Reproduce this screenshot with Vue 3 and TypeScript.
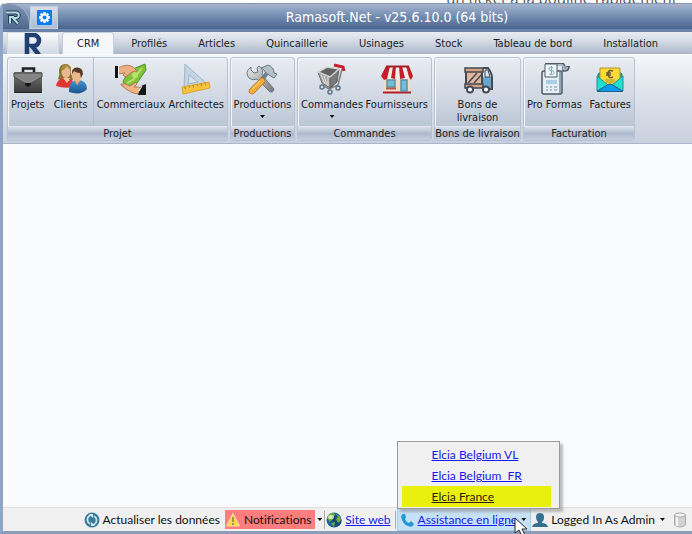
<script setup lang="ts">
import { ref } from 'vue'

interface Command {
  label: string
  icon: string
  drop?: boolean
  divider?: boolean
}
interface Group {
  name: string
  size: string
  commands: Command[]
}

const tabs = ['CRM', 'Profilés', 'Articles', 'Quincaillerie', 'Usinages', 'Stock', 'Tableau de bord', 'Installation']
const activeTab = ref('CRM')
const menuOpen = ref(true)
const contacts = ['Elcia Belgium VL', 'Elcia Belgium\u00a0 FR', 'Elcia France']

const groups: Group[] = [
  {
    name: 'Projet',
    size: 'xl',
    commands: [
      { label: 'Projets', icon: 'case' },
      { label: 'Clients', icon: 'people' },
      { label: 'Commerciaux', icon: 'money', divider: true },
      { label: 'Architectes', icon: 'ruler' },
    ],
  },
  { name: 'Productions', size: 's', commands: [{ label: 'Productions', icon: 'tools', drop: true }] },
  {
    name: 'Commandes',
    size: 'l',
    commands: [
      { label: 'Commandes', icon: 'cart', drop: true },
      { label: 'Fournisseurs', icon: 'shop' },
    ],
  },
  { name: 'Bons de livraison', size: 'm', commands: [{ label: 'Bons de livraison', icon: 'truck' }] },
  {
    name: 'Facturation',
    size: 'ml',
    commands: [
      { label: 'Pro Formas', icon: 'terminal' },
      { label: 'Factures', icon: 'mail' },
    ],
  },
]
</script>

<template>
  <div class="page">
    <div class="behind"><span>un ticket à la pouline rapidement</span></div>
    <div class="window">
      <header class="titlebar">
        <div class="app-corner">
          <svg width="16" height="16" viewBox="0 0 16 16" aria-hidden="true">
            <path d="M1 3.500h10a2.500 2.500 0 0 1 0 5.500H8l5 5.500M5 14.500V8h4" fill="none" stroke="#24394f" stroke-width="4" />
            <path d="M1 3.500h10a2.500 2.500 0 0 1 0 5.500H8l5 5.500M5 14.500V8h4" fill="none" stroke="#b5dce2" stroke-width="2" />
          </svg>
        </div>
        <button class="gear" aria-label="Options">
          <svg width="15" height="15" viewBox="0 0 15 15">
            <rect width="15" height="15" rx="1" fill="#087cf5" />
            <g stroke="#fff" stroke-width="2.400">
              <path d="M7.500 2v11M2 7.500h11M3.600 3.600l7.800 7.800M11.400 3.600l-7.800 7.800" />
            </g>
            <circle cx="7.500" cy="7.500" r="4" fill="#fff" />
            <circle cx="7.500" cy="7.500" r="2" fill="#087cf5" />
          </svg>
        </button>
        <h1>Ramasoft.Net - v25.6.10.0 (64 bits)</h1>
      </header>

      <nav class="tabs">
        <button class="home" aria-label="Menu principal">
          <svg width="20" height="22" viewBox="0 0 20 22">
            <path d="M4 22V2h6.500a5 5 0 0 1 0 11H9l7 9" fill="none" stroke="#1f3f70" stroke-width="4.600" />
          </svg>
        </button>
        <button v-for="t in tabs" :key="t" class="tab" :class="{ active: t === activeTab }" @click="activeTab = t">{{ t }}</button>
      </nav>

      <div class="ribbon">
        <section v-for="g in groups" :key="g.name" class="group" :class="g.size">
          <div class="commands">
            <button v-for="c in g.commands" :key="c.label" class="command" :class="[c.icon, { divider: c.divider }]">
              <svg width="32" height="32" viewBox="0 0 32 32" aria-hidden="true">
                <defs>
                  <linearGradient id="steel" x2="0" y2="1"><stop stop-color="#777" /><stop offset="1" stop-color="#383838" /></linearGradient>
                  <linearGradient id="silver" x2="1" y2="1"><stop stop-color="#eee" /><stop offset="1" stop-color="#777" /></linearGradient>
                  <linearGradient id="blue" x2="0" y2="1"><stop stop-color="#469ad0" /><stop offset="1" stop-color="#195392" /></linearGradient>
                </defs>
                <g v-if="c.icon === 'case'">
                  <path d="M11 11V5.500h11V11" fill="none" stroke="#222" stroke-width="2.600" />
                  <rect x="9" y="9" width="3.500" height="4" fill="#333" /><rect x="20.500" y="9" width="3.500" height="4" fill="#333" />
                  <rect x="2" y="9" width="28" height="21" rx="1" fill="url(#steel)" />
                  <path d="M2 10h28v4l-14 8L2 14z" fill="#858585" stroke="#4b4b4b" /><path d="M2.500 29.500h27" stroke="#222" />
                  <path d="M13 20h6v2l-3 2-3-2z" fill="#171717" />
                </g>
                <g v-else-if="c.icon === 'people'">
                  <path d="M3 16q2-4 1-9Q5 1 10 1q7 0 6 9l2 7H5" fill="#8a7331" />
                  <ellipse cx="11" cy="9" rx="4.500" ry="6" fill="#eab78e" /><path d="M6 8q4-1 6-5l4 6V4l-4-3-5 2z" fill="#a58b40" />
                  <path d="M1 23q1-7 8-8l4 3 4-2 2 8Q9 26 1 23z" fill="#df3832" /><path d="m8 15 4 5 3-5" fill="#f7c5a1" />
                  <path d="M14 27q0-9 8-10 10 0 10 9-6 7-18 3z" fill="url(#blue)" />
                  <path d="m19 17 3 5 4-5" fill="#e3a36d" /><ellipse cx="22" cy="12" rx="5" ry="6.500" fill="#e9b789" />
                  <path d="M17 11q-1-6 5-6.500 6 0 6 6.500l-2 4-1-5q-4 0-6-2z" fill="#5a3828" />
                </g>
                <g v-else-if="c.icon === 'money'">
                  <path d="m8 18 4-6L18 6l12-5 1 6-9 13-11 4z" fill="#7fc23a" stroke="#4d912b" /><path d="m12 20 6-3 9-12" fill="none" stroke="#b6df70" stroke-width="2" /><circle cx="20" cy="12" r="3" fill="#b5e36a" />
                  <path d="M3 5q9-5 15-1l4 4-5 1-5 4q-3 2-4-1l2-2-7 1z" fill="#e9b084" stroke="#b98058" />
                  <path d="M0 3h3v12H0z" fill="#111" /><path d="M3 4h1v9H3z" fill="#fff" />
                  <path d="M6 21q5-1 9 2l6-4 1 2-3 3q5-1 8 2l-3 5q-8 0-18-9z" fill="#edb486" stroke="#b77a52" />
                  <path d="m26 23 5-2v11h-8z" fill="#171717" /><path d="m24 28 3-5" stroke="#fff" />
                </g>
                <g v-else-if="c.icon === 'ruler'">
                  <path fill-rule="evenodd" d="M5 1 4 25l22-5zM9 12l-1 9 10-2z" fill="#c3d5e5" stroke="#9fb7cc" />
                  <path d="m2 24 27-5 1 6-27 6z" fill="#f6c23d" stroke="#dba62f" /><path d="m5 24 .5 2m3.500-3 .5 1.500m3.500-2.500.5 2.500m3.500-3 .5 1.500m3.500-2.500.5 2.500m3.500-3 .5 1.500" fill="none" stroke="#a8812a" />
                </g>
                <g v-else-if="c.icon === 'tools'">
                  <path d="M5 4q-7 5-2 11 4 3 8 1l12 12q4 3 5-2L16 12q2-6-3-9l-2 2 1 4-4 1-3-3z" fill="url(#silver)" stroke="#657b8b" />
                  <path d="m15 5 7-3q6 2 6 8l3 1-3 4-5-3-3-2q-1-3-5-5z" fill="#b5c1c9" stroke="#647887" /><path d="m21 10-6 8" stroke="#71818d" stroke-width="4" />
                  <path d="M16 18 6 28" stroke="#b06f25" stroke-width="6.500" stroke-linecap="round" /><path d="M16 18 6 28" stroke="#f7ae3a" stroke-width="5" stroke-linecap="round" /><path d="m14 18-8 8" stroke="#ffdf92" />
                </g>
                <g v-else-if="c.icon === 'cart'">
                  <path d="m26 6-4 16-9 4-7-4" fill="none" stroke="#808080" stroke-width="1.500" />
                  <path d="m2 9 12 5 3 9-3 2-8-5z" fill="#a9a9a9" stroke="#686868" />
                  <path d="m14 14 9-8-2 13-7 6z" fill="#7b7b7b" stroke="#5c5c5c" />
                  <path d="m2 9 9-5 12 2-9 8z" fill="#626262" stroke="#d5d5d5" stroke-width="1.500" />
                  <path d="m5 12 4 9m-1-8 3 9m1-8v9" stroke="#dedede" />
                  <path d="m18 2 9 2 1 4" fill="none" stroke="#c9202d" stroke-width="3" />
                  <g fill="#d4e1ea" stroke="#5e7488" stroke-width="1.500"><circle cx="6" cy="24" r="2" /><circle cx="14" cy="29" r="2" /><circle cx="22" cy="25" r="2" /></g>
                </g>
                <g v-else-if="c.icon === 'shop'">
                  <path d="M3 10h26v19H3z" fill="#f1ddc9" /><path d="M2 29.500h28" stroke="#b71e29" stroke-width="2" />
                  <path d="M5 3h22l5 10-2 4-2-3-4 3-3-3-4 3-4-3-3 3-4-3-3 3-3-4z" fill="#f3eeee" />
                  <path d="M5 3h4L6 16l-3 1-3-4zM12 3h3l-1 13-4-1zM18 3h3l3 12-5 1zM25 3h3l4 10-2 4-2-3z" fill="#c22029" /><path d="M5 3.500h23" stroke="#a81d26" stroke-width="2" />
                  <path d="M6 17h8v7H6zM20 17h6v11h-6z" fill="#72bdd8" stroke="#5c8f9f" stroke-width="1.500" /><path d="M5 25.500h10" stroke="#b4594a" stroke-width="2" />
                </g>
                <g v-else-if="c.icon === 'truck'">
                  <path d="M4 9h16v12H4z" fill="#e3b49b" /><path d="M21 14h9v11h-9z" fill="#6aa5d2" />
                  <path d="m6 20 9-10m-3 10 8-9" stroke="#424a54" stroke-width="1.500" />
                  <path d="M3 5h18v4H3zM3 21h18v4H3z" fill="#d89f84" stroke="#424a54" stroke-width="1.500" /><path d="M4 9v12m16-12v12M21 5h5q4 5 4 10v11H21" fill="none" stroke="#424a54" stroke-width="2" />
                  <path d="M23 7h3l2 7h-5z" fill="#d6e6f0" stroke="#424a54" />
                  <g fill="#fff" stroke="#424a54" stroke-width="2"><circle cx="8" cy="26.500" r="3" /><circle cx="24" cy="26.500" r="3" /></g>
                </g>
                <g v-else-if="c.icon === 'terminal'">
                  <path d="M7 1h16q3 0 3 4v2q4 0 4-3V3" fill="none" stroke="#4f5a65" stroke-width="3.500" /><path d="M19 2h4q3 0 3 4 3 1 3-2" fill="none" stroke="#a5bccb" stroke-width="2" />
                  <rect x="4" y="8" width="20" height="23" rx="2" fill="#e3eef5" stroke="#4f5a65" stroke-width="1.500" /><path d="M21 9h2v21h-2z" fill="#8fa9b9" />
                  <path d="M7 1h12v13H7z" fill="#f1f6f9" stroke="#4f5a65" /><path d="M15.500 5q-4.500-2-4.500 1 0 1.500 2 1.500 3 0 3 2 0 3-5 1.500M13.500 3v9" fill="none" stroke="#7fa9c3" />
                  <path d="M8 17h11v4H8z" fill="#a9d0e2" /><path d="M8 24h2m2 0h2m2 0h3M8 27h2m2 0h2m2 0h3" stroke="#9db3c0" stroke-width="1.500" />
                </g>
                <g v-else>
                  <path d="m4 11 3-2v19H4zM28 11l-3-2v19h3z" fill="#16a6b4" stroke="#28727b" />
                  <path d="M6 5h20v16l-10 4-10-4z" fill="#ffdb37" stroke="#ae942b" />
                  <path d="M19 8q-5-2-5 3t5 3m-7-4h5m-5 2h5" fill="none" stroke="#685c28" stroke-width="1.500" /><path d="M11 17h10M12 19h8" stroke="#a48c35" />
                  <path d="m3 13 11 9-11 6zM29 13l-11 9 11 6z" fill="#1fe0cf" stroke="#248b96" />
                  <path d="m3 28.500 11-7q2-1 4 0l11 7z" fill="#0b9bec" stroke="#216089" />
                </g>
              </svg>
              <span class="caption">{{ c.label }}</span>
              <i v-if="c.drop" class="arrow"></i>
            </button>
          </div>
          <h2>{{ g.name }}</h2>
        </section>
      </div>

      <main class="workspace"></main>

      <footer class="status">
        <button class="item refresh">
          <svg width="16" height="16" viewBox="0 0 16 16" aria-hidden="true">
            <circle cx="8" cy="8" r="7.500" fill="#397b9b" />
            <path d="M7 3Q2 5 4 10l2 2M9 13q5-2 3-7l-2-2" fill="none" stroke="#d3e7ee" stroke-width="1.700" /><path d="M5 2h4v4zM11 14H7v-4z" fill="#d3e7ee" />
          </svg>
          Actualiser les données
        </button>
        <button class="item notice">
          <svg width="16" height="16" viewBox="0 0 16 16" aria-hidden="true"><path d="M8 1.500 14.500 14h-13z" fill="#ffd84a" stroke="#f3e3a8" stroke-linejoin="round" /><path d="M8 5v5m0 1v2" stroke="#8d7a3f" stroke-width="1.500" /></svg>
          Notifications
        </button>
        <button class="drop" aria-label="Liste des notifications"><i class="arrow"></i></button>
        <div class="item site">
          <svg width="16" height="16" viewBox="0 0 16 16" aria-hidden="true">
            <circle cx="8" cy="8" r="7.500" fill="#17669d" /><circle cx="10" cy="9" r="5.500" fill="#164b78" />
            <path d="M1 6Q2 1 8 1l1 2-3 2 1 2-3 3zM10 2q5 2 5 6l-3 3-2-4 2-2zM5 11l4-1-1 5z" fill="#76ad44" /><ellipse cx="5" cy="5" rx="3" ry="2" fill="#e2f2cd" opacity=".8" />
          </svg>
          <a href="#">Site web</a>
        </div>
        <div class="assist">
          <svg width="16" height="16" viewBox="0 0 16 16" aria-hidden="true"><path d="M3 2q-3 1-1 6t6 6q5 2 6-2l-3-3-2 2q-3-1-4-4l1-2-1-3z" fill="#229bd5" /></svg>
          <a href="#">Assistance en ligne</a>
          <button class="drop" aria-label="Choisir un contact" @click="menuOpen = !menuOpen"><i class="arrow"></i></button>
          <div v-if="menuOpen" class="menu">
            <a v-for="(c, i) in contacts" :key="c" href="#" :class="{ chosen: i === 2 }">{{ c }}</a>
          </div>
          <svg class="pointer" width="14" height="20" viewBox="0 0 14 20" aria-hidden="true"><path d="M1 1v15l4-3 3 6 3-1-3-6h5z" fill="#fff" stroke="#222" /></svg>
        </div>
        <button class="item user">
          <svg width="16" height="16" viewBox="0 0 16 16" aria-hidden="true"><path d="M4 5q0-4 4-4t4 4-2 5v1q5 0 6 4H0q1-4 6-4v-1Q4 8 4 5z" fill="#33718c" /></svg>
          Logged In As Admin
          <i class="arrow"></i>
        </button>
        <svg class="database" width="14" height="16" viewBox="0 0 14 16" role="img" aria-label="Base de données"><path d="M1.500 3v10q5.500 4 11 0V3" fill="#d2d2d2" stroke="#aaa" /><path d="M4 5v9" stroke="#f5f5f5" stroke-width="2" /><ellipse cx="7" cy="3" rx="5.500" ry="2" fill="#f2f2f2" stroke="#aaa" /></svg>
      </footer>
    </div>
  </div>
</template>

<style>
body {
  background: #fff;
}
</style>

<style scoped>
* {
  box-sizing: border-box;
}
.page {
  display: flex;
  flex-direction: column;
  min-height: 100vh;
  overflow: hidden;
  color: #1b1b22;
  font: 11px/13px "DejaVu Sans Condensed", "DejaVu Sans", sans-serif;
}
button {
  padding: 0;
  border: 0;
  background: none;
  color: inherit;
  font: inherit;
}
svg {
  display: block;
  flex: none;
}
.behind {
  display: flex;
  align-items: flex-end;
  justify-content: flex-end;
  height: 3px;
  padding-right: 15px;
  overflow: hidden;
  color: #555;
  font: 15px/10px "Open Sans", sans-serif;
}
.window {
  display: flex;
  flex: 1;
  flex-direction: column;
  border-left: 3px solid #8fa5c8;
  border-bottom: 3px solid #8b9db9;
  border-top-left-radius: 5px;
}
.titlebar {
  display: flex;
  align-items: flex-end;
  height: 29px;
  border-top: 1px solid #8497b5;
  border-bottom: 3px solid #6c82a6;
  border-top-left-radius: 5px;
  background: linear-gradient(#a4b5ce, #7890b4 45%, #48658f);
}
.app-corner {
  display: flex;
  align-items: center;
  width: 27px;
  height: 25px;
  padding-left: 2px;
  border-right: 1px solid #a8b8cf;
  border-top-right-radius: 20px;
  background: linear-gradient(#8296b4, #4c678e);
}
.gear {
  display: flex;
  align-items: center;
  justify-content: center;
  width: 28px;
  height: 23px;
  border: 1px solid #c4cfdf;
  background: linear-gradient(#d7dee8, #aebdd2);
}
h1 {
  flex: 1;
  margin: 0;
  padding-left: 44px;
  color: #fff;
  font-size: 14px;
  font-weight: 400;
  line-height: 24px;
  text-align: center;
}
.tabs {
  display: flex;
  gap: 3px;
  height: 22px;
  padding-left: 4px;
  background: linear-gradient(#e9edf2, #cfd6e1 50%, #aab6ca);
}
.home {
  display: flex;
  justify-content: center;
  width: 52px;
  border: 1px solid #d5dce6;
  background: linear-gradient(#fafbfc, #d2d9e4);
}
.tab {
  padding: 0 14px;
  white-space: nowrap;
}
.tab.active {
  border: 1px solid #c5cedb;
  border-bottom: 0;
  border-radius: 3px 3px 0 0;
  background: #f5f7fa;
}
.ribbon {
  display: flex;
  gap: 2px;
  height: 90px;
  padding: 2px 4px;
  border: 1px solid #a9b6c9;
  border-top-color: #f8fafc;
  border-left: 0;
  border-right: 0;
  background: linear-gradient(#f4f6f9, #dce1ea 50%, #c9d1df);
}
.group {
  display: flex;
  flex: none;
  flex-direction: column;
  border: 1px solid #b7c2d3;
  border-radius: 3px;
  background: linear-gradient(#e9edf2, #cfd7e2 50%, #b1bed0);
  box-shadow: inset 1px 1px #f3f6fa;
}
.xl { width: 221px; }
.s { width: 65px; }
.l { width: 135px; }
.m { width: 87px; }
.ml { width: 112px; }
.commands {
  display: flex;
  flex: 1;
  justify-content: space-between;
  padding: 0 3px;
}
.command {
  display: flex;
  flex-direction: column;
  align-items: center;
  padding-top: 5px;
}
.s .commands,
.m .commands {
  justify-content: center;
  padding: 0;
}
.truck {
  width: 50px;
}
.people {
  padding: 5px 2px 0 6px;
}
.divider {
  padding-left: 3px;
  border-left: 1px solid #afbdd0;
}
.caption {
  margin-top: 3px;
}
.arrow {
  display: block;
  flex: none;
  width: 5px;
  height: 3px;
  background: #111;
  clip-path: polygon(0 0, 100% 0, 50% 100%);
}
.command .arrow {
  margin-top: 4px;
}
h2 {
  height: 14px;
  margin: 0;
  border-top: 1px solid #e0e6ef;
  background: linear-gradient(#d9e0ea, #adbace 50%, #c5d0df);
  font: inherit;
  text-align: center;
  white-space: nowrap;
}
.workspace {
  flex: 1;
  background: #f9fbfd;
}
.status {
  display: flex;
  align-items: center;
  justify-content: flex-end;
  height: 24px;
  padding-right: 5px;
  border-top: 1px solid #dedede;
  background: #f0f0f0;
  color: #111;
  font: 12px/18px Lato, sans-serif;
  font-variant-ligatures: none;
  white-space: nowrap;
}
.item {
  display: flex;
  align-items: center;
  gap: 3px;
}
.notice {
  height: 19px;
  margin-left: 5px;
  padding-right: 4px;
  background: #ff7d7d;
}
.drop {
  padding: 6px 2px;
}
.site {
  padding: 0 4px 0 1px;
  border: solid #aaa;
  border-width: 0 1px;
}
a {
  color: #1717ee;
}
.assist {
  display: flex;
  position: relative;
  align-items: center;
  gap: 2px;
  height: 23px;
  margin-left: 1px;
  padding: 0 2px;
  border: 1px solid #a5cdee;
  background: #c6e0f6;
}
.user {
  margin-left: 1px;
}
.user .arrow {
  margin-left: 2px;
}
.database {
  margin-left: 8px;
}
.menu {
  display: flex;
  position: absolute;
  bottom: 21px;
  left: -1px;
  flex-direction: column;
  width: 163px;
  padding: 2px 8px 1px 4px;
  border: 1px solid #999;
  background: #f0f0f0;
  box-shadow: 3px 3px 2px #8888;
}
.menu a {
  height: 21px;
  padding-left: 30px;
  line-height: 21px;
}
.menu .chosen {
  background: #eaf00d;
  color: #2b210a;
}
.pointer {
  position: absolute;
  right: 2px;
  top: 8px;
}
</style>
